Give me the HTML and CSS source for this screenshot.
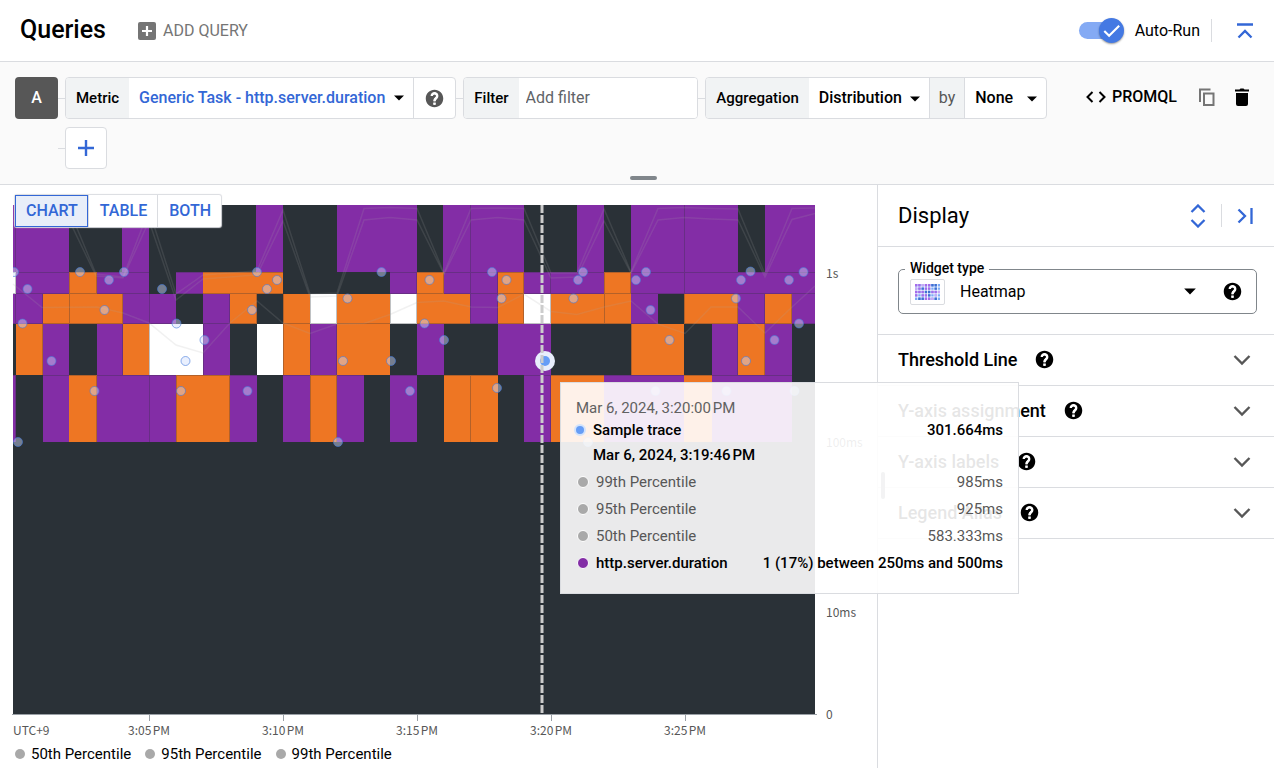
FILE: index.html
```html
<!DOCTYPE html>
<html lang="en">
<head>
<meta charset="utf-8">
<title>Queries</title>
<link rel="stylesheet" href="styles.css">
</head>
<body>
<svg class="defs" aria-hidden="true">
  <symbol id="help" viewBox="0 0 24 24"><path fill="currentColor" d="M12 2C6.480 2 2 6.480 2 12s4.480 10 10 10 10-4.480 10-10S17.520 2 12 2zm1 17h-2v-2h2v2zm2.070-7.750l-.9.920C13.450 12.900 13 13.500 13 15h-2v-.5c0-1.100.45-2.100 1.170-2.830l1.240-1.260c.37-.36.59-.86.59-1.410 0-1.100-.9-2-2-2s-2 .9-2 2H8c0-2.210 1.790-4 4-4s4 1.790 4 4c0 .88-.36 1.680-.93 2.250z"/><path fill="none" stroke="#fff" stroke-width="2.800" d="M8.900 9.200a3.100 3.100 0 1 1 5.300 2c-1.200 1.200-2.200 1.800-2.200 3.800"/><path fill="#fff" d="M10.600 16.500h2.800v2.700h-2.800z"/></symbol>
  <symbol id="caret" viewBox="0 0 10 6"><path fill="currentColor" d="M0 0.500h10L5 5.500z"/></symbol>
  <symbol id="chevron" viewBox="0 0 18 12"><path fill="none" stroke="currentColor" stroke-width="2.400" d="M1.500 2L9 9.500 16.500 2"/></symbol>
</svg>

<header class="topbar">
  <h1 class="title">Queries</h1>
  <button class="add-query" type="button">
    <svg class="icon-18" viewBox="0 0 18 18"><rect width="18" height="18" rx="2" fill="#757575"/><path d="M9 4v10M4 9h10" stroke="#fff" stroke-width="2.200"/></svg>
    ADD QUERY
  </button>
  <label class="autorun">
    <span class="switch">
      <input class="switch-input" type="checkbox" checked>
      <span class="switch-knob"><svg viewBox="0 0 26 26"><path d="M5.500 13.500l5 5L21 8" fill="none" stroke="#fff" stroke-width="2.200"/></svg></span>
    </span>
    Auto-Run
  </label>
  <span class="divider"></span>
  <button class="icon-button blue collapse" type="button" aria-label="Collapse">
    <svg class="icon-16" viewBox="0 0 16 16" fill="none" stroke="currentColor" stroke-width="2.300"><path d="M0 1.500h16M1.500 14.500L8 8l6.500 6.500"/></svg>
  </button>
</header>

<section class="query">
  <div class="query-row">
    <button class="query-name" type="button">A</button>
    <span class="link"></span>
    <div class="chip">
      <span class="chip-label">Metric</span>
      <button class="chip-value metric" type="button">Generic Task - http.server.duration <svg class="caret"><use href="#caret"/></svg></button>
      <button class="chip-help" type="button" aria-label="Metric help"><svg class="help"><use href="#help"/></svg></button>
    </div>
    <span class="link"></span>
    <div class="chip chip-filter">
      <label class="chip-label" for="filter">Filter</label>
      <input class="filter" id="filter" type="text" placeholder="Add filter">
    </div>
    <span class="link"></span>
    <div class="chip">
      <label class="chip-label" for="aggregation">Aggregation</label>
      <span class="picker picker-wide"><select id="aggregation"><option>Distribution</option></select><svg class="caret"><use href="#caret"/></svg></span>
      <label class="chip-by" for="group">by</label>
      <span class="picker"><select id="group"><option>None</option></select><svg class="caret"><use href="#caret"/></svg></span>
    </div>
    <div class="query-actions">
      <button class="promql" type="button">
        <svg class="code" viewBox="0 0 20 12" fill="none" stroke="currentColor" stroke-width="2"><path d="M6.500 1l-5 5 5 5M13.500 1l5 5-5 5"/></svg>
        PROMQL
      </button>
      <button class="icon-button copy" type="button" aria-label="Copy"><svg class="icon-18" viewBox="0 0 18 18" fill="none" stroke="#757575" stroke-width="2"><path d="M2 14V1.500h10.500"/><path d="M6 5.500h9.500V17H6z"/></svg></button>
      <button class="icon-button" type="button" aria-label="Delete"><svg class="icon-18" viewBox="0 0 18 18"><path d="M2 1.500h4.500L7.500.5h3l1 1H16v2H2zM3 5h12v11q0 2-2 2H5q-2 0-2-2z"/></svg></button>
    </div>
  </div>
  <div class="query-row second">
    <span class="link"></span>
    <button class="plus" type="button" aria-label="Add element"><svg class="icon-16" viewBox="0 0 16 16"><path d="M8 0v16M0 8h16" stroke="currentColor" stroke-width="2.400"/></svg></button>
  </div>
  <span class="handle"></span>
</section>

<main class="main">
  <section class="chart">
    <div class="views">
      <button class="view active" type="button">CHART</button>
      <button class="view" type="button">TABLE</button>
      <button class="view" type="button">BOTH</button>
    </div>
    <svg class="plot" viewBox="0 185 877 556" role="img" aria-label="Latency heatmap">
      <rect x="13" y="205" width="802" height="509" fill="#2a3137"/>
      <g class="row-1">
        <path class="purple" d="M13 238.500H69M122 238.500H149M256 238.500H283M337 238.500H417M443 238.500H524M577 238.500H604M631 238.500H738M765 238.500H815"/>
      </g>
      <g class="row-2">
        <path class="white" d="M13 283H16"/>
        <path class="purple" d="M16 283H69M97 283H149M176 283H203M390 283H417M444 283H498M524 283H604M631 283H815"/>
        <path class="orange" d="M69 283H97M203 283H283M417 283H444M498 283H524M604 283H631"/>
      </g>
      <g class="row-3">
        <path class="purple" d="M13 309H43M123 309H176M203 309H230M470 309H498M631 309H658M738 309H765M792 309H815"/>
        <path class="orange" d="M43 309H123M230 309H257M283 309H310M337 309H390M417 309H470M498 309H524M551 309H631M684 309H738M765 309H792"/>
        <path class="white" d="M310 309H337M390 309H417M524 309H551"/>
      </g>
      <g class="row-4">
        <path class="purple" d="M43 349.500H69M97 349.500H123M203 349.500H230M310 349.500H337M417 349.500H444M498 349.500H551M712 349.500H738M765 349.500H792"/>
        <path class="orange" d="M16 349.500H43M123 349.500H149M283 349.500H310M337 349.500H390M631 349.500H684M738 349.500H765"/>
        <path class="white" d="M149 349.500H203M257 349.500H283"/>
      </g>
      <g class="row-5">
        <path class="purple" d="M13 408.500H16M43 408.500H69M97 408.500H176M230 408.500H257M283 408.500H310M337 408.500H364M390 408.500H417M524 408.500H551M604 408.500H684M712 408.500H792"/>
        <path class="orange" d="M69 408.500H97M176 408.500H230M310 408.500H337M444 408.500H498M551 408.500H604M684 408.500H712"/>
      </g>
      <path class="edges" d="M13 272.500H815M13 293.500H815M13 323.500H815M13 375.500H815M15.500 205V442M69.500 205V324M149.500 272V442M470.500 205V324M470.500 375V442M604.500 205V324M684.500 205V324M96.500 272V294M416.500 272V294M443.500 272V294M497.500 272V324M523.500 272V294M550.500 272V324M630.500 272V294M42.500 294V375M122.500 294V324M229.500 294V324M256.500 294V375M283.500 294V375M310.500 294V375M336.500 294V375M390.500 294V375M416.500 294V324M523.500 294V324M737.500 294V375M764.500 294V375M791.500 294V324M203.500 324V375M122.500 324V375M631.500 324V375M96.500 375V442M176.500 375V442M229.500 375V442M310.500 375V442M336.500 375V442M550.500 375V442"/>
      <g class="percentiles">
        <path d="M13 221L42 208 69 209 96 274 123 277 149 210 176 294 203 275 257 271 283 210 310 294 337 293 364 208.500 390 207.500 417 208.500 444 273 471 208.500 498 208 524 208.500 551 273 577 273 604 209 631 272 658 208.500 684 207.500 711 208.500 738 209 765 274 792 208.500 815 208"/>
        <path d="M13 228L42 218 69 220 96 276 123 278 149 221 176 300 203 279 257 275 283 221 310 297 337 296 364 220 390 217.500 417 220 444 274 471 220 498 217.500 524 220 551 278 577 277 604 221 631 273 658 220 684 217.500 711 219 738 220 765 277 792 219.500 815 213.500"/>
        <path d="M13 284L42 307.500 97 307 123 313 149 323 176 345 203 353 230 323 257 301 283 323 310 333.500 337 324 364 323.500 390 314.500 417 302.500 444 301 471 307 498 307.500 524 294 551 311.500 577 314.500 604 307 631 301 658 324 685 333.500 711 307 738 307 765 333 792 307 815 286"/>
      </g>
      <clipPath id="area"><rect x="13" y="205" width="802" height="509"/></clipPath>
      <g class="dots" clip-path="url(#area)">
        <circle cx="14" cy="272" r="4.500"/><circle cx="80" cy="272" r="4.500"/><circle cx="109" cy="280" r="4.500"/><circle cx="124" cy="272" r="4.500"/><circle cx="27.500" cy="289" r="4.500"/><circle cx="162" cy="289" r="4.500"/><circle cx="257" cy="272" r="4.500"/><circle cx="277" cy="280" r="4.500"/><circle cx="267" cy="289" r="4.500"/><circle cx="104.500" cy="310" r="4.500"/><circle cx="252" cy="310" r="4.500"/><circle cx="22.500" cy="323.500" r="4.500"/><circle cx="176.500" cy="323.500" r="4.500"/><circle cx="204.500" cy="340" r="4.500"/><circle cx="51.500" cy="361" r="4.500"/><circle cx="185.500" cy="361" r="4.500"/><circle cx="94.500" cy="391" r="4.500"/><circle cx="181" cy="391" r="4.500"/><circle cx="247.500" cy="391" r="4.500"/><circle cx="18" cy="442" r="4.500"/>
        <circle cx="381.500" cy="272" r="4.500"/><circle cx="429.500" cy="280" r="4.500"/><circle cx="492" cy="272" r="4.500"/><circle cx="506.500" cy="280" r="4.500"/><circle cx="347.500" cy="298.500" r="4.500"/><circle cx="501.500" cy="298.500" r="4.500"/><circle cx="424.500" cy="323.500" r="4.500"/><circle cx="444" cy="340" r="4.500"/><circle cx="343" cy="361" r="4.500"/><circle cx="391" cy="361" r="4.500"/><circle cx="410" cy="391" r="4.500"/><circle cx="497" cy="388" r="4.500"/><circle cx="338" cy="442" r="4.500"/>
        <circle cx="583" cy="272" r="4.500"/><circle cx="578" cy="280" r="4.500"/><circle cx="573.500" cy="298.500" r="4.500"/><circle cx="636" cy="280" r="4.500"/><circle cx="646" cy="272" r="4.500"/><circle cx="650.500" cy="310" r="4.500"/><circle cx="669.500" cy="340" r="4.500"/><circle cx="736" cy="298.500" r="4.500"/><circle cx="741" cy="280" r="4.500"/><circle cx="750.500" cy="271.500" r="4.500"/><circle cx="789" cy="280" r="4.500"/><circle cx="803.500" cy="272" r="4.500"/><circle cx="799" cy="323.500" r="4.500"/><circle cx="774.500" cy="340" r="4.500"/><circle cx="746" cy="361" r="4.500"/><circle cx="655.500" cy="391" r="4.500"/><circle cx="726.500" cy="391" r="4.500"/><circle cx="794.500" cy="391" r="4.500"/><circle cx="588" cy="442" r="4.500"/>
      </g>
      <circle cx="545" cy="361" r="10" fill="#e8eefc"/>
      <circle cx="545" cy="361" r="5" fill="#669df6"/>
      <path class="cursor" d="M542 205V713"/>
      <path class="axis" d="M12 714.500H817M149.500 715V721M283.500 715V721M417.500 715V721M551.500 715V721M685.500 715V721"/>
      <g class="axis-text">
        <text x="13" y="735">UTC+9</text>
        <text class="mid" x="149" y="735">3:05&#8239;PM</text>
        <text class="mid" x="283" y="735">3:10&#8239;PM</text>
        <text class="mid" x="417" y="735">3:15&#8239;PM</text>
        <text class="mid" x="551" y="735">3:20&#8239;PM</text>
        <text class="mid" x="685" y="735">3:25&#8239;PM</text>
        <text x="826" y="278">1s</text>
        <text x="826" y="447">100ms</text>
        <text x="826" y="617">10ms</text>
        <text x="826" y="719">0</text>
      </g>
    </svg>
    <ul class="legend">
      <li>50th Percentile</li>
      <li>95th Percentile</li>
      <li>99th Percentile</li>
    </ul>
    <span class="side-handle"></span>
  </section>

  <aside class="display">
    <header class="display-head">
      <h2 class="display-title">Display</h2>
      <button class="icon-button blue" type="button" aria-label="Expand all"><svg class="unfold" viewBox="0 0 16 24" fill="none" stroke="currentColor" stroke-width="2.300"><path d="M1.500 8L8 1.500 14.500 8M1.500 16L8 22.500 14.500 16"/></svg></button>
      <span class="divider"></span>
      <button class="icon-button blue" type="button" aria-label="Hide panel"><svg class="icon-16" viewBox="0 0 16 16" fill="none" stroke="currentColor" stroke-width="2.300"><path d="M1.500 1.500L8 8l-6.500 6.500M14.500 0v16"/></svg></button>
    </header>
    <div class="widget-section">
      <div class="widget">
        <label class="widget-label" for="widget">Widget type</label>
        <span class="thumb"><svg viewBox="0 0 25 16">
          <g fill="none" stroke-width="2.400" stroke-dasharray="2.400 0.850">
            <path stroke="#7baaf7" d="M0 1.200h25M0 4.600h25M0 8h25M0 11.400h25M0 14.800h25"/>
            <path stroke="#a66bea" d="M0 1.200h5.600M9.750 1.200h5.700M3.250 4.600h2.400M9.750 4.600h5.600M0 8h9M16.250 8h5.600M6.500 11.400h5.600M0 11.400h2.400M9.750 14.800h5.600"/>
            <path stroke="#3f6fd1" d="M16.250 1.200h5.600M6.500 4.600h2.400M19.500 4.600h2.400M9.750 8h5.600M13 11.400h2.400M3.250 14.800h5.600M19.500 14.800h2.400"/>
            <path stroke="#c9a8f5" d="M6.500 1.200h2.400M0 4.600h2.400M22.750 8h2.400M19.500 11.400h2.400M16.250 14.800h2.400"/>
          </g></svg></span>
        <select class="widget-select" id="widget"><option>Heatmap</option></select>
        <svg class="caret caret-large"><use href="#caret"/></svg>
        <button class="icon-button" type="button" aria-label="Widget type help"><svg class="help"><use href="#help"/></svg></button>
      </div>
    </div>
    <button class="option" type="button">Threshold Line <svg class="help"><use href="#help"/></svg><svg class="chevron"><use href="#chevron"/></svg></button>
    <button class="option" type="button">Y-axis assignment <svg class="help"><use href="#help"/></svg><svg class="chevron"><use href="#chevron"/></svg></button>
    <button class="option" type="button">Y-axis labels <svg class="help"><use href="#help"/></svg><svg class="chevron"><use href="#chevron"/></svg></button>
    <button class="option" type="button">Legend Alias <svg class="help"><use href="#help"/></svg><svg class="chevron"><use href="#chevron"/></svg></button>
  </aside>

  <div class="tooltip" role="tooltip">
    <p class="tip-date">Mar 6, 2024, 3:20:00&#8239;PM</p>
    <p class="tip-row tip-sample"><span class="tip-dot ring"></span>Sample trace<span class="tip-value">301.664ms</span></p>
    <p class="tip-time">Mar 6, 2024, 3:19:46&#8239;PM</p>
    <p class="tip-row"><span class="tip-dot"></span>99th Percentile<span class="tip-value">985ms</span></p>
    <p class="tip-row"><span class="tip-dot"></span>95th Percentile<span class="tip-value">925ms</span></p>
    <p class="tip-row"><span class="tip-dot"></span>50th Percentile<span class="tip-value">583.333ms</span></p>
    <p class="tip-row strong"><span class="tip-dot violet"></span>http.server.duration<span class="tip-value">1 (17%) between 250ms and 500ms</span></p>
  </div>
</main>
</body>
</html>
```

FILE: styles.css
```css
* { box-sizing: border-box; }
body {
  margin: 0;
  min-height: 100vh;
  display: flex;
  flex-direction: column;
  background: #fff;
  color: #000;
  font: 400 16px/24px Roboto, "Noto Sans CJK JP", sans-serif;
}
button, select, input { font: inherit; color: inherit; margin: 0; }
button { padding: 0; border: 0; background: none; cursor: pointer; white-space: nowrap; }
select { appearance: none; border: 0; background: none; outline: 0; }
h1, h2, p, ul { margin: 0; padding: 0; }
svg { display: block; flex: none; }
.defs { position: absolute; width: 0; height: 0; }
.icon-16 { width: 16px; height: 16px; }
.icon-18 { width: 18px; height: 18px; }
.help { width: 21px; height: 21px; }
.caret { width: 10px; height: 6px; }
.caret-large { width: 12px; height: 7px; }
.blue { color: #3367d6; }
.icon-button { display: flex; align-items: center; justify-content: center; }
.divider { width: 1px; height: 23px; background: #dadce0; }

.topbar {
  display: flex;
  align-items: center;
  height: 62px;
  padding: 0 21px 0 20px;
  border-bottom: 1px solid #dadce0;
}
.title { padding-bottom: 2px; font-size: 25px; font-weight: 500; line-height: 32px; }
.add-query { display: flex; align-items: center; gap: 7px; margin-left: 32px; color: #757575; }
.autorun { display: flex; align-items: center; gap: 11px; margin-left: auto; }
.autorun + .divider { margin: 0 25px 0 11px; }
.switch { position: relative; display: flex; align-items: center; width: 45px; height: 26px; }
.switch-input { appearance: none; width: 40px; height: 17px; margin: 0; border-radius: 9px; background: #84aaf4; }
.switch-knob {
  position: absolute;
  right: 0;
  top: 0;
  width: 25px;
  height: 25px;
  border-radius: 50%;
  background: #4479e3;
  box-shadow: 0 1px 2px rgba(0, 0, 0, 0.4);
  pointer-events: none;
}

.query {
  position: relative;
  height: 123px;
  padding: 15px 23px 0 15px;
  background: #fafafa;
  border-bottom: 1px solid #dadce0;
}
.query-row { display: flex; align-items: center; }
.second { padding: 8px 0 0 43px; }
.query-name { width: 43px; height: 42px; border-radius: 4px; background: #575757; color: #fff; font-weight: 500; }
.link { width: 7px; height: 1px; background: #dadce0; }
.chip {
  display: flex;
  height: 42px;
  border: 1px solid #dadce0;
  border-radius: 4px;
  background: #fff;
  overflow: hidden;
  font-weight: 500;
}
.chip-label { display: flex; align-items: center; padding: 0 10px; background: #f1f3f4; font-size: 15px; }
.chip-value { display: flex; align-items: center; gap: 9px; padding: 0 9px 0 10px; }
.metric { color: #3367d6; }
.metric .caret { color: #000; }
.chip-help { padding: 0 10px; border-left: 1px solid #dadce0; color: #575757; }
.chip-filter { width: 235px; }
.filter { flex: 1; min-width: 0; border: 0; padding: 0 7px; outline: 0; font-weight: 400; }
.filter::placeholder { color: #5f6368; opacity: 1; }
.picker { position: relative; display: flex; width: 81px; }
.picker-wide { width: 120px; }
.picker select { width: 100%; padding: 0 10px; }
.picker .caret { position: absolute; right: 9px; top: 18px; pointer-events: none; }
.chip-by {
  display: flex;
  align-items: center;
  padding: 0 9px;
  border: solid #dadce0;
  border-width: 0 1px;
  background: #f1f3f4;
  color: #575757;
  font-weight: 400;
}
.query-actions { display: flex; align-items: center; gap: 17px; margin-left: auto; padding-bottom: 2px; }
.promql { display: flex; align-items: center; gap: 6px; font-weight: 500; }
.copy { margin-left: 4px; }
.code { width: 20px; height: 12px; }
.plus {
  display: flex;
  align-items: center;
  justify-content: center;
  width: 42px;
  height: 42px;
  border: 1px solid #dadce0;
  border-radius: 4px;
  background: #fff;
  color: #3367d6;
}
.handle { position: absolute; left: calc(50% - 7px); bottom: 4px; width: 27px; height: 4px; border-radius: 2px; background: #80868b; }

.main { position: relative; flex: 1; display: grid; grid-template-columns: minmax(0, 1fr) 397px; }
.chart { position: relative; }
.views {
  position: absolute;
  left: 15px;
  top: 10px;
  display: flex;
  background: #fff;
  box-shadow: 0 0 1px 1px #dadce0;
  border-radius: 2px;
}
.view { height: 32px; padding: 0 10px 0 11px; color: #3367d6; font-weight: 500; }
.view + .view { border-left: 1px solid #dadce0; }
.view.active { background: #e8eef9; outline: 1px solid #3367d6; outline-offset: -1px; }
.plot { width: 100%; height: auto; }
.plot path { fill: none; shape-rendering: crispEdges; }
.row-1, .row-5 { stroke-width: 67px; }
.row-2 { stroke-width: 22px; }
.row-3 { stroke-width: 30px; }
.row-4 { stroke-width: 51px; }
.purple { stroke: #832da6; }
.orange { stroke: #ee7623; }
.white { stroke: #fff; }
.edges { stroke: rgba(42, 49, 55, 0.3); }
.plot .percentiles path { stroke: rgba(170, 170, 170, 0.16); stroke-width: 1.5px; shape-rendering: auto; }
.dots { fill: rgba(208, 222, 252, 0.45); stroke: rgba(66, 121, 218, 0.6); }
.plot .cursor { stroke: #ccc; stroke-width: 3px; stroke-dasharray: 8 2; shape-rendering: auto; }
.axis { stroke: #9aa0a6; }
.axis-text { fill: #575757; font: 400 12px "Noto Sans CJK JP", sans-serif; }
.mid { text-anchor: middle; }
.legend { display: flex; gap: 14px; padding: 1px 15px 0; list-style: none; font-size: 15px; }
.legend li { display: flex; align-items: center; gap: 6px; }
.legend li::before { content: ""; width: 10px; height: 10px; border-radius: 50%; background: #a9a9a9; }
.side-handle { position: absolute; right: -8px; top: 287px; width: 4px; height: 27px; border-radius: 2px; background: #80868b; }

.display { border-left: 1px solid #dadce0; }
.display-head { display: flex; align-items: center; height: 62px; padding: 0 21px 0 20px; border-bottom: 1px solid #dadce0; }
.display-title { flex: 1; font-size: 22px; font-weight: 400; line-height: 32px; }
.display-head .divider { margin: 0 15px; }
.unfold { width: 16px; height: 24px; }
.widget-section { padding: 22px 17px 20px 20px; border-bottom: 1px solid #dadce0; }
.widget {
  position: relative;
  display: flex;
  align-items: center;
  height: 45px;
  padding: 0 13px 0 11px;
  border: 1px solid #80868b;
  border-radius: 5px;
}
.widget-label { position: absolute; left: 6px; top: -12px; padding: 0 5px; background: #fff; font-size: 14px; font-weight: 500; line-height: 20px; }
.thumb { display: flex; align-items: center; justify-content: center; width: 35px; height: 26px; border: 1px solid #dadce0; border-radius: 2px; }
.thumb svg { width: 25px; height: 16px; }
.widget-select { flex: 1; padding: 0; margin-left: 15px; }
.widget .icon-button { margin-left: 26px; }
.option {
  display: flex;
  align-items: center;
  gap: 17px;
  width: 100%;
  height: 51px;
  padding: 0 23px 1px 20px;
  border-bottom: 1px solid #dadce0;
  font-size: 18px;
  font-weight: 500;
}
.chevron { width: 18px; height: 12px; margin-left: auto; color: #575757; }

.tooltip {
  position: absolute;
  left: 560px;
  top: 197px;
  width: 459px;
  padding: 14px 15px 17px;
  border: 1px solid #dadce0;
  background: rgba(255, 255, 255, 0.9);
  font-size: 15px;
}
.tip-date { line-height: 22px; color: #616161; }
.tip-row { display: flex; align-items: center; height: 27px; color: #575757; }
.tip-dot { width: 12px; height: 12px; margin: 0 7px 0 1px; border: 1px solid #fff; border-radius: 50%; background: #a9a9a9; }
.tip-value { margin-left: auto; }
.tip-sample { height: 22px; color: #000; font-weight: 500; }
.ring { margin: 0 7px 0 -2px; border: 2px solid #d2e3fc; background: #669df6; }
.tip-time { height: 27px; padding-left: 17px; line-height: 28px; font-weight: 500; color: #000; }
.violet { background: #832da6; }
.strong { color: #000; font-weight: 500; }
```
